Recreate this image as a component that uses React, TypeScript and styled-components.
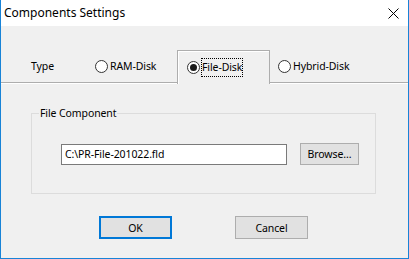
import * as React from 'react';
import styled, { createGlobalStyle } from 'styled-components';

const colors = {
  ACCENT: '#1883d7',
  FOCUS: '#0078d7',
  FACE: '#f0f0f0',
  BUTTON: '#e1e1e1',
  BUTTON_BORDER: '#adadad',
  TAB_BORDER: '#adadad',
  GROUP_BORDER: '#dcdcdc',
  INPUT_BORDER: '#7a7a7a',
  TEXT: '#000000',
};

const GlobalStyle = createGlobalStyle`
  html, body {
    margin: 0;
    padding: 0;
    background: #ffffff;
  }
  * {
    box-sizing: border-box;
  }
`;

const Window = styled.div`
  display: flex;
  flex-direction: column;
  width: 409px;
  height: 259px;
  border: 1px solid ${colors.ACCENT};
  border-top: none;
  font-family: 'Segoe UI', 'Noto Sans', sans-serif;
  font-size: 10.5px;
  letter-spacing: -0.1px;
  color: ${colors.TEXT};
  background: ${colors.FACE};
`;

const TitleBar = styled.div`
  display: flex;
  align-items: center;
  justify-content: space-between;
  height: 26px;
  padding: 0 9px 0 3px;
  background: #ffffff;
`;

const Title = styled.span`
  font-size: 12px;
  letter-spacing: 0;
  padding-bottom: 1px;
`;

const CloseIcon = () => (
  <svg width="11" height="11" viewBox="0 0 11 11">
    <path d="M0.5 0.5 L10.5 10.5 M10.5 0.5 L0.5 10.5" stroke="#000" strokeWidth="1" fill="none" />
  </svg>
);

const Body = styled.div`
  display: flex;
  flex-direction: column;
  flex: 1;
  padding-top: 24px;
`;

const TabRow = styled.div`
  display: flex;
  align-items: stretch;
  height: 33px;
  padding-left: 30px;
  border-bottom: 1px solid ${colors.TAB_BORDER};
  box-shadow: 0 1px 0 #ffffff;
`;

const TypeLabel = styled.span`
  display: flex;
  align-items: center;
  width: 64px;
`;

const Tab = styled.div<{ $selected?: boolean; $width?: number; $inset?: number }>`
  display: flex;
  align-items: center;
  padding-left: ${p => (p.$inset ? `${p.$inset}px` : '0')};
  width: ${p => (p.$width ? `${p.$width}px` : 'auto')};
  ${p =>
    p.$selected &&
    `
    border: 1px solid ${colors.TAB_BORDER};
    border-bottom: none;
    box-shadow: inset 1px 1px 0 #ffffff;
    margin-bottom: -2px;
    background: ${colors.FACE};
    position: relative;
    z-index: 1;
  `}
`;

const Radio = styled.span<{ $checked?: boolean }>`
  display: inline-flex;
  align-items: center;
  justify-content: center;
  width: 13px;
  height: 13px;
  border: 1px solid #333333;
  border-radius: 50%;
  background: #ffffff;
  margin-right: 2px;

  &:after {
    content: '';
    display: ${p => (p.$checked ? 'block' : 'none')};
    width: 7px;
    height: 7px;
    border-radius: 50%;
    background: #1a1a1a;
  }
`;

const RadioText = styled.span<{ $focused?: boolean }>`
  padding: 1px 0 2px;
  line-height: 14px;
  outline: ${p => (p.$focused ? '1px dotted #000' : 'none')};
  outline-offset: 0;
`;

const Panel = styled.div`
  display: flex;
  flex-direction: column;
  flex: 1;
  padding: 22px 32px 0 30px;
`;

const GroupBox = styled.fieldset`
  margin: 0;
  padding: 22px 16px 0 7px;
  height: 89px;
  border: 1px solid ${colors.GROUP_BORDER};
`;

const Legend = styled.legend`
  padding: 0 1px;
  line-height: 16px;
`;

const FileRow = styled.div`
  display: flex;
  align-items: center;
  justify-content: space-between;
  padding-left: 22px;
`;

const PathInput = styled.input`
  width: 226px;
  height: 21px;
  padding: 0 3px;
  border: 1px solid ${colors.INPUT_BORDER};
  background: #ffffff;
  font: inherit;
  letter-spacing: inherit;
  color: ${colors.TEXT};
  outline: none;
`;

const Button = styled.button<{ $default?: boolean; $width?: number; $height?: number }>`
  width: ${p => (p.$width ? `${p.$width}px` : '73px')};
  height: ${p => (p.$height ? `${p.$height}px` : '23px')};
  padding: 0;
  font: inherit;
  letter-spacing: inherit;
  color: ${colors.TEXT};
  background: ${colors.BUTTON};
  border: ${p => (p.$default ? `2px solid ${colors.FOCUS}` : `1px solid ${colors.BUTTON_BORDER}`)};
`;

const ButtonRow = styled.div`
  display: flex;
  justify-content: center;
  gap: 63px;
  margin-top: 22px;
`;

export default function App() {
  return (
    <>
      <GlobalStyle />
      <Window>
        <TitleBar>
          <Title>Components Settings</Title>
          <CloseIcon />
        </TitleBar>
        <Body>
          <TabRow>
            <TypeLabel>Type</TypeLabel>
            <Tab $width={82}>
              <Radio />
              <RadioText>RAM-Disk</RadioText>
            </Tab>
            <Tab $selected $width={93} $inset={9}>
              <Radio $checked />
              <RadioText $focused>File-Disk</RadioText>
            </Tab>
            <Tab $inset={8}>
              <Radio />
              <RadioText>Hybrid-Disk</RadioText>
            </Tab>
          </TabRow>
          <Panel>
            <GroupBox>
              <Legend>File Component</Legend>
              <FileRow>
                <PathInput defaultValue="C:\PR-File-201022.fld" readOnly />
                <Button $width={59} $height={22}>Browse...</Button>
              </FileRow>
            </GroupBox>
            <ButtonRow>
              <Button $default>OK</Button>
              <Button>Cancel</Button>
            </ButtonRow>
          </Panel>
        </Body>
      </Window>
    </>
  );
}
